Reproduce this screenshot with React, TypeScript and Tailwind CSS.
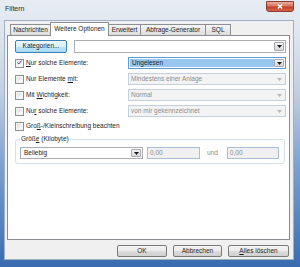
import React from "react";

function Arrow({ disabled }: { disabled?: boolean }) {
  return (
    <svg width="5" height="3" viewBox="0 0 5 3">
      <path d="M0 0H5L2.5 3Z" fill={disabled ? "#b8b8b8" : "#1a1a1a"} />
    </svg>
  );
}

function DropBtn({ disabled }: { disabled?: boolean }) {
  if (disabled) {
    return (
      <div className="w-[10px] h-full flex items-center justify-center">
        <Arrow disabled />
      </div>
    );
  }
  return (
    <div className="w-[10px] h-full flex items-center justify-center border border-[#a6a8ad] rounded-[1px] bg-[linear-gradient(180deg,#f4f4f4_0%,#e6e6e6_50%,#d8d8d8_100%)]">
      <Arrow />
    </div>
  );
}

function Checkbox({ checked }: { checked?: boolean }) {
  return (
    <div className="w-[9px] h-[9px] shrink-0 border border-[#8e8f8f] bg-[#f4f4f4] p-[1px]">
      <div className="w-full h-full bg-[linear-gradient(135deg,#d9d9d9_0%,#f3f3f3_60%,#ffffff_100%)] flex items-center justify-center">
        {checked && (
          <svg width="7" height="7" viewBox="0 0 7 7" className="-mt-[1px]">
            <path d="M0.8 3.6L2.7 5.6L6.3 0.8" stroke="#3c4f8f" strokeWidth="1.3" fill="none" />
          </svg>
        )}
      </div>
    </div>
  );
}

function Label({ pre, u, post }: { pre: string; u: string; post: string }) {
  return (
    <span className="text-[#1e1e1e] whitespace-nowrap">
      {pre}
      <span className="underline underline-offset-[1px]">{u}</span>
      {post}
    </span>
  );
}

function OptionRow({
  checked,
  label,
  value,
  mode,
}: {
  checked?: boolean;
  label: React.ReactNode;
  value: string;
  mode: "selected" | "disabled";
}) {
  return (
    <div className="mt-[4px] h-[12px] flex items-center">
      <Checkbox checked={checked} />
      <span className="ml-[2px]">{label}</span>
      {mode === "selected" ? (
        <div className="ml-auto w-[158px] h-full border border-[#5b9ad8] bg-white flex items-stretch p-[1px]">
          <div className="flex-1 bg-[#99c6ef] flex items-center pl-[2px] text-[#1e1e1e]">{value}</div>
          <DropBtn />
        </div>
      ) : (
        <div className="ml-auto w-[158px] h-full border border-[#c3cfdc] bg-[#f3f3f3] flex items-stretch pr-[1px]">
          <div className="flex-1 flex items-center pl-[2px] text-[#8c8c8c]">{value}</div>
          <DropBtn disabled />
        </div>
      )}
    </div>
  );
}

function Button({ w, children }: { w: string; children: React.ReactNode }) {
  return (
    <div
      className={`${w} h-full border border-[#7a7a7a] rounded-[2px] bg-[linear-gradient(180deg,#f3f3f3_0%,#ebebeb_50%,#dddddd_51%,#cfcfcf_100%)] flex items-center justify-center text-[#1e1e1e]`}
    >
      {children}
    </div>
  );
}

export default function App() {
  return (
    <div className="w-[300px] h-[267px] flex flex-col pl-[4px] pr-[6px] pb-[7px] font-['Liberation_Sans',Arial,sans-serif] text-[6.5px] leading-none bg-[linear-gradient(180deg,#e7ecf2_0%,#dfe6ee_12%,#bfcfe1_35%,#7ea1cd_62%,#3a6bb0_100%)]">
      {/* Title bar */}
      <div className="h-[20px] flex justify-between items-start">
        <span className="mt-[5px] ml-[1px] text-[7px] text-[#2a2a2a]">Filtern</span>
        <div className="w-[28px] h-[11px] mt-[1px] rounded-b-[3px] border border-[#8a3a2e] bg-[linear-gradient(180deg,#eab0a2_0%,#d9735f_45%,#c2412b_55%,#d8654a_100%)] flex items-center justify-center">
          <svg width="6" height="5" viewBox="0 0 6 5">
            <path d="M0.8 0.5L5.2 4.5M5.2 0.5L0.8 4.5" stroke="#ffffff" strokeWidth="1.4" />
          </svg>
        </div>
      </div>

      {/* Client area */}
      <div className="flex-1 bg-[#f0f0f0] border border-[#9fb0c4] flex flex-col">
        {/* Tabs */}
        <div className="mt-[1px] h-[13px] flex items-end pl-[5px]">
          <div className="w-[41px] h-[11px] border border-b-0 border-[#8c8e94] bg-[linear-gradient(180deg,#f5f5f5_0%,#e9e9e9_50%,#dcdcdc_100%)] flex items-center justify-center text-[#1e1e1e]">
            Nachrichten
          </div>
          <div className="relative z-10 w-[59px] h-[14px] -mb-[1px] -ml-[1px] border border-b-0 border-[#8c8e94] bg-white flex items-center justify-center pb-[1px] text-[#1e1e1e]">
            Weitere Optionen
          </div>
          <div className="w-[33px] h-[11px] -ml-[1px] border border-b-0 border-[#8c8e94] bg-[linear-gradient(180deg,#f5f5f5_0%,#e9e9e9_50%,#dcdcdc_100%)] flex items-center justify-center text-[#1e1e1e]">
            Erweitert
          </div>
          <div className="w-[66px] h-[11px] -ml-[1px] border border-b-0 border-[#8c8e94] bg-[linear-gradient(180deg,#f5f5f5_0%,#e9e9e9_50%,#dcdcdc_100%)] flex items-center justify-center text-[#1e1e1e]">
            Abfrage-Generator
          </div>
          <div className="w-[26px] h-[11px] -ml-[1px] border border-b-0 border-[#8c8e94] bg-[linear-gradient(180deg,#f5f5f5_0%,#e9e9e9_50%,#dcdcdc_100%)] flex items-center justify-center text-[#1e1e1e]">
            SQL
          </div>
        </div>

        {/* Panel */}
        <div className="ml-[2px] mr-[3px] h-[205px] border border-[#898c95] bg-white pl-[7px] pr-[3px] flex flex-col">
          <div className="mt-[4px] h-[13px] flex items-stretch">
            <div className="w-[52px] border border-[#3c7fb1] rounded-[2px] bg-[linear-gradient(180deg,#eaf6fd_0%,#d9f0fc_50%,#bee6fd_51%,#a7d9f5_100%)] flex items-center justify-center text-[#1e1e1e]">
              Kategorien...
            </div>
            <div className="ml-[7px] flex-1 border border-[#abadb3] bg-white flex items-stretch p-[1px]">
              <div className="flex-1" />
              <DropBtn />
            </div>
          </div>

          <OptionRow checked label={<Label pre="" u="N" post="ur solche Elemente:" />} value="Ungelesen" mode="selected" />
          <OptionRow label={<Label pre="Nur Elemente " u="m" post="it:" />} value="Mindestens einer Anlage" mode="disabled" />
          <OptionRow label={<Label pre="Mit " u="W" post="ichtigkeit:" />} value="Normal" mode="disabled" />
          <OptionRow label={<Label pre="Nu" u="r" post=" solche Elemente:" />} value="von mir gekennzeichnet" mode="disabled" />

          <div className="mt-[4px] h-[10px] flex items-center">
            <Checkbox />
            <span className="ml-[2px]">
              <Label pre="Gro" u="ß" post="-/Kleinschreibung beachten" />
            </span>
          </div>

          {/* Group box */}
          <div className="relative mt-[8px] mr-[1px] h-[25px] border border-[#d5dfe5] rounded-[3px] pt-[7px] pl-[4px]">
            <span className="absolute -top-[4px] left-[4px] px-[1px] bg-white">
              <Label pre="Größ" u="e" post=" (Kilobyte)" />
            </span>
            <div className="h-[12px] flex items-center">
              <div className="w-[123px] h-full border border-[#abadb3] bg-white flex items-stretch p-[1px]">
                <div className="flex-1 flex items-center pl-[2px] text-[#1e1e1e]">Beliebig</div>
                <DropBtn />
              </div>
              <div className="ml-[4px] w-[53px] h-full border border-[#a9bdd5] bg-[#f0f0f0] flex items-center pl-[2px] text-[#8c8c8c]">
                0,00
              </div>
              <span className="ml-[7px] text-[#8c8c8c]">und</span>
              <div className="ml-[9px] w-[52px] h-full border border-[#a9bdd5] bg-[#f0f0f0] flex items-center pl-[2px] text-[#8c8c8c]">
                0,00
              </div>
            </div>
          </div>
        </div>

        {/* Buttons */}
        <div className="mt-[5px] h-[12px] flex justify-end gap-[6px] pr-[4px]">
          <Button w="w-[50px]">OK</Button>
          <Button w="w-[49px]">Abbrechen</Button>
          <Button w="w-[61px]">
            <Label pre="" u="A" post="lles löschen" />
          </Button>
        </div>
      </div>
    </div>
  );
}
